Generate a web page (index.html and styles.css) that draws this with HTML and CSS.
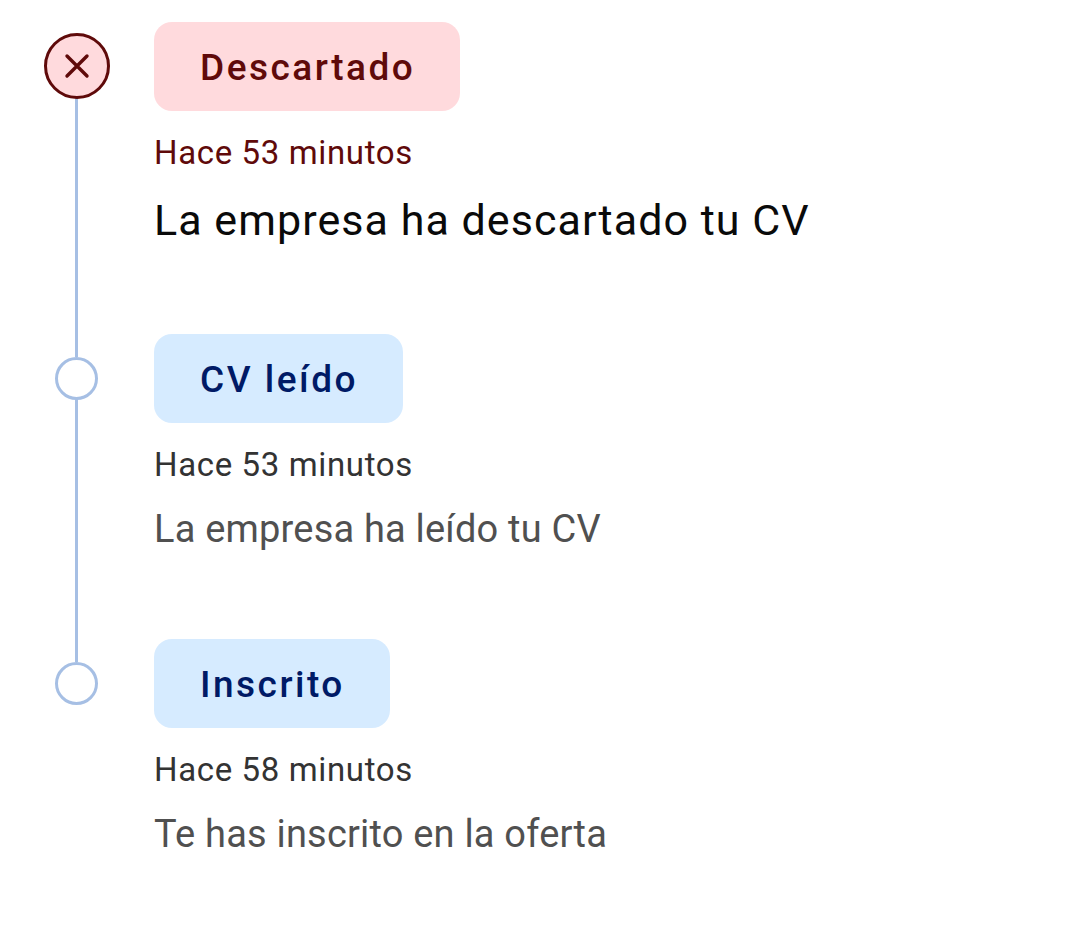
FILE: index.html
```html
<!DOCTYPE html>
<html lang="es">
<head>
  <meta charset="UTF-8">
  <meta name="viewport" content="width=device-width, initial-scale=1.0">
  <title>Estado de la candidatura</title>
  <link rel="stylesheet" href="styles.css">
</head>
<body>
  <ul class="timeline">
    <li class="step step-rejected">
      <div class="rail">
        <div class="marker-box">
          <span class="marker">
            <svg viewBox="0 0 26 26" width="26" height="26" aria-hidden="true">
              <path d="M3 3 L23 23 M23 3 L3 23" fill="none" stroke="#5f0a0a" stroke-width="3.4" stroke-linecap="round"/>
            </svg>
          </span>
        </div>
        <div class="line"></div>
      </div>
      <div class="content">
        <span class="tag">Descartado</span>
        <p class="time">Hace 53 minutos</p>
        <p class="desc">La empresa ha descartado tu CV</p>
      </div>
    </li>
    <li class="step">
      <div class="rail">
        <div class="marker-box"><span class="marker"></span></div>
        <div class="line"></div>
      </div>
      <div class="content">
        <span class="tag">CV leído</span>
        <p class="time">Hace 53 minutos</p>
        <p class="desc">La empresa ha leído tu CV</p>
      </div>
    </li>
    <li class="step step-last">
      <div class="rail">
        <div class="marker-box"><span class="marker"></span></div>
      </div>
      <div class="content">
        <span class="tag">Inscrito</span>
        <p class="time">Hace 58 minutos</p>
        <p class="desc">Te has inscrito en la oferta</p>
      </div>
    </li>
  </ul>
</body>
</html>
```

FILE: styles.css
```css
/* General styles */
body {
  margin: 0;
  background: #ffffff;
  font-family: Roboto, 'Liberation Sans', sans-serif;
}

.timeline {
  list-style: none;
  margin: 0;
  padding: 22px 0 0 44px;
}

.step {
  display: flex;
  gap: 45px;
  height: 305px;
}

.step-rejected {
  height: 312px;
}

/* Left rail with marker and connecting line */
.rail {
  width: 65px;
  display: flex;
  flex-direction: column;
  align-items: center;
}

.marker-box {
  position: relative;
  z-index: 1;
  height: 88px;
  display: flex;
  align-items: center;
  justify-content: center;
}

.marker {
  box-sizing: border-box;
  flex-shrink: 0;
  width: 43px;
  height: 43px;
  border: 3px solid #a6bfe4;
  border-radius: 50%;
  background: #ffffff;
  display: flex;
  align-items: center;
  justify-content: center;
}

.step-rejected .marker {
  width: 66px;
  height: 66px;
  border-color: #5f0a0a;
  background: #ffdadd;
}

.line {
  flex-grow: 1;
  width: 3px;
  margin: -23px 0;
  background: #a6bfe4;
}

.step-rejected .line {
  margin-top: -12px;
}

/* Text column */
.content {
  display: flex;
  flex-direction: column;
  align-items: flex-start;
}

.tag {
  height: 89px;
  padding: 0 45px 0 46px;
  border-radius: 18px;
  background: #d6ebff;
  color: #001a66;
  font-size: 37px;
  font-weight: 500;
  letter-spacing: 2.5px;
  line-height: 91px;
}

.step-rejected .tag {
  background: #ffdadd;
  color: #5f0a0a;
}

.time {
  margin: 22px 0 0;
  color: #333333;
  font-size: 33px;
  line-height: 40px;
  letter-spacing: 0.63px;
}

.step-rejected .time {
  color: #5f0a0a;
}

.desc {
  margin: 20px 0 0;
  color: #505050;
  font-size: 38px;
  line-height: 48px;
  letter-spacing: 0.2px;
}

.step-rejected .desc {
  margin-top: 23px;
  color: #0a0a0a;
  font-size: 43px;
  letter-spacing: 1.05px;
}
```
